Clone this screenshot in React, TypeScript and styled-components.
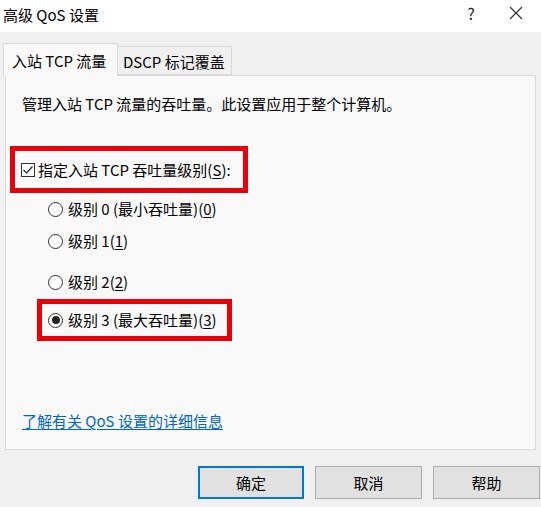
import React from "react";
import styled, { createGlobalStyle } from "styled-components";

const Global = createGlobalStyle`
  html, body { margin: 0; padding: 0; }
  body {
    background: #f0f0f0;
    font-family: "Noto Sans CJK SC", "Noto Sans", sans-serif;
    font-size: 15px;
    color: #000;
  }
`;

const Dialog = styled.div`
  width: 541px;
  height: 507px;
  background: #f0f0f0;
  display: flex;
  flex-direction: column;
  overflow: hidden;
`;

const TitleBar = styled.div`
  height: 32px;
  background: #fff;
  display: flex;
  align-items: center;
  padding-left: 3px;
  box-sizing: border-box;
`;

const Title = styled.div`
  flex: 1;
  font-size: 15px;
  line-height: 20px;
  margin-top: -3px;
`;

const TitleButton = styled.div<{ $w: number }>`
  width: ${(p) => p.$w}px;
  display: flex;
  justify-content: center;
  align-items: center;
  margin-top: -6px;
  font-size: 16px;
  color: #222;
`;

const Body = styled.div`
  padding: 10px 5px 0 5px;
  display: flex;
  flex-direction: column;
`;

const TabRow = styled.div`
  display: flex;
  align-items: flex-end;
  height: 33px;
  margin-left: -2px;
  position: relative;
  z-index: 1;
`;

const Tab = styled.div<{ $active?: boolean; $w: number }>`
  width: ${(p) => p.$w}px;
  height: ${(p) => (p.$active ? 33 : 29)}px;
  box-sizing: border-box;
  border: 1px solid #d9d9d9;
  border-bottom: ${(p) => (p.$active ? "none" : "1px solid #d9d9d9")};
  border-left: ${(p) => (p.$active ? "1px solid #d9d9d9" : "none")};
  background: ${(p) => (p.$active ? "#f9f9f9" : "#f0f0f0")};
  display: flex;
  align-items: center;
  padding-left: ${(p) => (p.$active ? 8 : 5)}px;
  padding-top: ${(p) => (p.$active ? 0 : 2)}px;
  font-size: 15px;
  white-space: nowrap;
  margin-bottom: ${(p) => (p.$active ? -1 : 0)}px;
`;

const Panel = styled.div`
  height: 375px;
  width: 531px;
  box-sizing: border-box;
  border: 1px solid #d9d9d9;
  background: #f9f9f9;
  display: flex;
  flex-direction: column;
  align-items: flex-start;
  padding-top: 18px;
`;

const Desc = styled.div`
  line-height: 20px;
  margin-left: 16px;
`;

const Highlight = styled.div<{ $mt: number; $ml: number; $w: number; $h: number; $pl: number }>`
  margin-top: ${(p) => p.$mt}px;
  margin-left: ${(p) => p.$ml}px;
  width: ${(p) => p.$w}px;
  height: ${(p) => p.$h}px;
  box-sizing: border-box;
  border: 5px solid #e8000b;
  display: flex;
  align-items: center;
  padding-left: ${(p) => p.$pl}px;
`;

const Option = styled.div<{ $mt?: number; $ml?: number }>`
  display: flex;
  align-items: center;
  height: 20px;
  line-height: 20px;
  margin-top: ${(p) => p.$mt ?? 0}px;
  margin-left: ${(p) => p.$ml ?? 0}px;
  white-space: nowrap;
`;

const CheckBox = styled.span`
  width: 14px;
  height: 14px;
  border: 1px solid #333;
  background: #fff;
  display: inline-flex;
  align-items: center;
  justify-content: center;
  margin-right: 3px;
  box-sizing: border-box;
`;

const Radio = styled.span<{ $on?: boolean }>`
  width: 15px;
  height: 15px;
  border-radius: 50%;
  border: 1px solid #333;
  background: #fff;
  box-sizing: border-box;
  display: inline-flex;
  align-items: center;
  justify-content: center;
  margin-right: 5px;
  &::after {
    content: "";
    display: ${(p) => (p.$on ? "block" : "none")};
    width: 8px;
    height: 8px;
    border-radius: 50%;
    background: #222;
  }
`;

const U = styled.span`
  text-decoration: underline;
  text-underline-offset: 2px;
`;

const Link = styled.a`
  margin-top: 70px;
  margin-left: 16px;
  line-height: 20px;
  color: #0066cc;
  text-decoration: underline;
  text-underline-offset: 2px;
  cursor: pointer;
`;

const ButtonRow = styled.div`
  display: flex;
  justify-content: flex-end;
  gap: 11px;
  margin-top: 16px;
  margin-right: -4px;
`;

const Button = styled.button<{ $default?: boolean }>`
  width: ${(p) => (p.$default ? 106 : 107)}px;
  height: 33px;
  box-sizing: border-box;
  border: ${(p) => (p.$default ? "2px solid #0078d7" : "1px solid #adadad")};
  background: #e1e1e1;
  font-family: "Noto Sans CJK SC", "Noto Sans", sans-serif;
  font-size: 15px;
  color: #000;
  padding: 0;
`;

export default function App() {
  return (
    <>
      <Global />
      <Dialog>
        <TitleBar>
          <Title>高级 QoS 设置</Title>
          <TitleButton $w={40}>?</TitleButton>
          <TitleButton $w={50}>
            <svg width="14" height="14" viewBox="0 0 14 14">
              <path d="M1 1 L13 13 M13 1 L1 13" stroke="#333" strokeWidth="1.2" />
            </svg>
          </TitleButton>
        </TitleBar>
        <Body>
          <TabRow>
            <Tab $active $w={115}>入站 TCP 流量</Tab>
            <Tab $w={114}>DSCP 标记覆盖</Tab>
          </TabRow>
          <Panel>
            <Desc>管理入站 TCP 流量的吞吐量。此设置应用于整个计算机。</Desc>
            <Highlight $mt={32} $ml={4} $w={238} $h={47} $pl={6}>
              <Option>
                <CheckBox>
                  <svg width="12" height="12" viewBox="0 0 12 12">
                    <path d="M1.5 6 L4.6 9 L10.5 2.5" fill="none" stroke="#222" strokeWidth="1.2" />
                  </svg>
                </CheckBox>
                指定入站 TCP 吞吐量级别(<U>S</U>):
              </Option>
            </Highlight>
            <Option $mt={6} $ml={42}>
              <Radio />
              级别 0 (最小吞吐量)(<U>0</U>)
            </Option>
            <Option $mt={12} $ml={42}>
              <Radio />
              级别 1(<U>1</U>)
            </Option>
            <Option $mt={21} $ml={42}>
              <Radio />
              级别 2(<U>2</U>)
            </Option>
            <Highlight $mt={7} $ml={31} $w={195} $h={42} $pl={6}>
              <Option>
                <Radio $on />
                级别 3 (最大吞吐量)(<U>3</U>)
              </Option>
            </Highlight>
            <Link>了解有关 QoS 设置的详细信息</Link>
          </Panel>
          <ButtonRow>
            <Button $default>确定</Button>
            <Button>取消</Button>
            <Button>帮助</Button>
          </ButtonRow>
        </Body>
      </Dialog>
    </>
  );
}
